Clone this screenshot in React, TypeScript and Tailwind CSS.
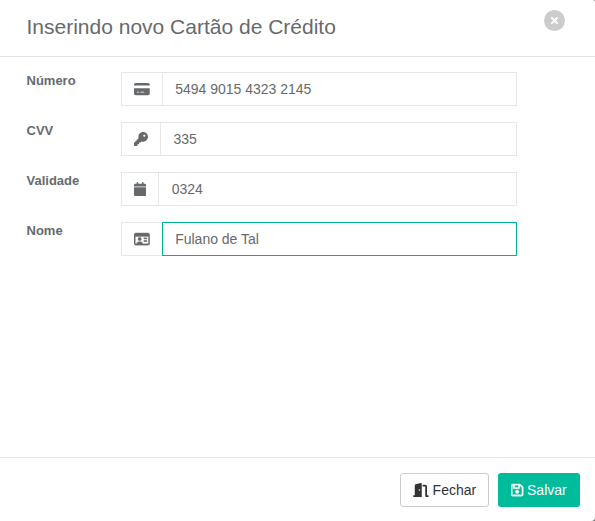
import type { ReactNode } from "react";
import {
  FaCalendar,
  FaCircleXmark,
  FaCreditCard,
  FaDoorOpen,
  FaKey,
  FaRegFloppyDisk,
  FaRegIdCard,
} from "react-icons/fa6";

type FieldProps = {
  label: string;
  value: string;
  icon: ReactNode;
  focused?: boolean;
};

function Field({ label, value, icon, focused }: FieldProps) {
  return (
    <div className="flex h-[34px]">
      <label className="w-[94.5px] shrink-0 text-[13px] leading-[17px] font-bold">{label}</label>
      <div className="flex w-[396px]">
        <span className="flex shrink-0 items-center border border-r-0 border-[#e5e6e7] px-3">{icon}</span>
        <input
          className={`min-w-0 flex-1 border bg-white pr-3 pl-[12.4px] text-[14px] outline-none ${
            focused ? "border-[#00b393]" : "border-[#e5e6e7]"
          }`}
          defaultValue={value}
        />
      </div>
    </div>
  );
}

export default function App() {
  return (
    <div className="h-[521px] w-[595px] bg-[#777777]">
      <div className="flex h-full flex-col rounded-tr-[2px] rounded-br-[4px] bg-white font-['Liberation_Sans',Arial,sans-serif] text-[#676a6c]">
        <header className="flex h-[57px] items-start justify-between border-b border-[#e5e5e5] pr-[30.5px] pl-[26.5px]">
          <h1 className="pt-[15px] text-[21px] leading-6">Inserindo novo Cartão de Crédito</h1>
          <button aria-label="Fechar" className="mt-[9.5px] text-[#cccccc]">
            <FaCircleXmark className="size-[21px]" />
          </button>
        </header>
        <main className="flex flex-1 flex-col gap-4 pt-[15px] pl-[26.5px]">
          <Field label="Número" value="5494 9015 4323 2145" icon={<FaCreditCard className="h-[14px] w-[15.75px]" />} />
          <Field label="CVV" value="335" icon={<FaKey className="size-[14px]" />} />
          <Field label="Validade" value="0324" icon={<FaCalendar className="h-[14px] w-[12.25px]" />} />
          <Field
            label="Nome"
            value="Fulano de Tal"
            icon={<FaRegIdCard className="h-[14px] w-[15.75px] stroke-current stroke-[12px]" />}
            focused
          />
        </main>
        <footer className="flex h-16 items-start justify-end gap-[9px] border-t border-[#e5e5e5] pt-[15px] pr-[15px] text-[14px]">
          <button className="flex h-[34px] w-[89px] items-center justify-center gap-1 rounded-[3px] border border-[#cccccc] bg-white text-[#333333]">
            <FaDoorOpen className="h-[14px] w-[15.75px]" />
            Fechar
          </button>
          <button className="flex h-[34px] w-[82px] items-center justify-center gap-[3.5px] rounded-[3px] bg-[#00bc9b] text-white">
            <FaRegFloppyDisk className="h-[14px] w-[12.25px] stroke-current stroke-[14px]" />
            Salvar
          </button>
        </footer>
      </div>
    </div>
  );
}
